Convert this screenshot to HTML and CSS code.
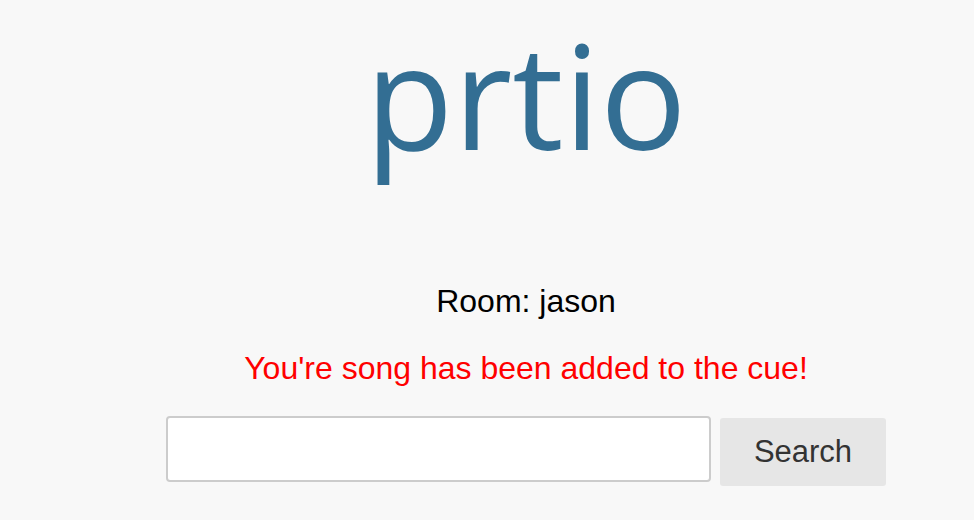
FILE: index.html
```html
<!DOCTYPE html>
<html>
<head>
<title>prtio</title>
<link rel="stylesheet" href="styles.css">
</head>
<body>
<div class="container">
  <h1 class="logo">prtio</h1>
  <div class="room">Room: jason</div>
  <div class="message">You're song has been added to the cue!</div>
  <form class="search-form" onsubmit="return false;">
    <input type="text" class="search-input" />
    <button type="submit" class="search-button">Search</button>
  </form>
</div>
</body>
</html>
```
FILE: styles.css
```css
body {
  margin: 0;
  background-color: #f8f8f8;
  font-family: "Liberation Sans", Arial, sans-serif;
}

.container {
  padding-left: 78px;
  text-align: center;
}

.logo {
  margin: 0;
  padding-top: 9px;
  font-family: "Open Sans", sans-serif;
  font-weight: normal;
  font-size: 144px;
  line-height: 170px;
  color: #336e93;
}

.room {
  margin-top: 104px;
  font-size: 32px;
  line-height: 36px;
  color: black;
}

.message {
  margin-top: 31px;
  font-size: 32px;
  line-height: 36px;
  color: #ff0000;
}

.search-form {
  display: flex;
  justify-content: center;
  align-items: flex-start;
  gap: 9px;
  margin-top: 30px;
}

.search-input {
  box-sizing: border-box;
  width: 545px;
  height: 66px;
  border: 2px solid #cccccc;
  border-radius: 4px;
  background-color: white;
  font-size: 28px;
  padding: 0 12px;
}

.search-button {
  box-sizing: border-box;
  width: 166px;
  height: 68px;
  margin-top: 2px;
  border: none;
  border-radius: 3px;
  background-color: #e6e6e6;
  color: #333333;
  font-family: "Liberation Sans", Arial, sans-serif;
  font-size: 31px;
  cursor: pointer;
}
```
